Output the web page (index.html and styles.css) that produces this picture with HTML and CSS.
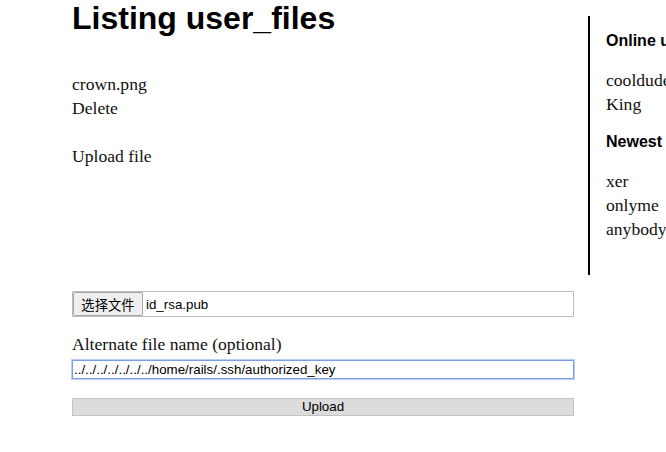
FILE: index.html
```html
<!DOCTYPE html>
<html>
<head>
<meta charset="utf-8">
<link rel="stylesheet" href="styles.css">
</head>
<body>
<div class="page">
  <main class="main">
    <h1 class="title">Listing user_files</h1>
    <div class="files">
      <div class="line">crown.png</div>
      <div class="line">Delete</div>
    </div>
    <div class="line upload-heading">Upload file</div>
    <form class="form">
      <div class="file-input">
        <span class="file-btn">选择文件</span>
        <span class="file-name">id_rsa.pub</span>
      </div>
      <label class="alt-label">Alternate file name (optional)</label>
      <input class="text-input" type="text" value="../../../../../../../home/rails/.ssh/authorized_key">
      <button class="upload-btn" type="button">Upload</button>
    </form>
  </main>
  <aside class="sidebar">
    <h3 class="side-title">Online users</h3>
    <div class="side-list">
      <div class="line">cooldude</div>
      <div class="line">King</div>
    </div>
    <h3 class="side-title side-title-2">Newest users</h3>
    <div class="side-list">
      <div class="line">xer</div>
      <div class="line">onlyme</div>
      <div class="line">anybody</div>
    </div>
  </aside>
</div>
</body>
</html>
```
FILE: styles.css
```css
html, body {
  margin: 0;
  padding: 0;
  background: #fff;
  overflow: hidden;
}
body {
  font-family: "Liberation Serif", serif;
  font-size: 17.6px;
  color: #111;
}
.page {
  display: flex;
  align-items: flex-start;
  padding-left: 72px;
  width: 760px;
}
.main {
  width: 502px;
  flex: none;
}
.title {
  font-family: "Liberation Sans", Arial, sans-serif;
  font-size: 32px;
  font-weight: bold;
  line-height: 36px;
  margin: 0;
  color: #000;
}
.files {
  margin-top: 36px;
}
.line {
  line-height: 24px;
}
.upload-heading {
  margin-top: 24px;
}
.form {
  display: flex;
  flex-direction: column;
  margin-top: 123px;
}
.file-input {
  display: flex;
  align-items: center;
  height: 26px;
  box-sizing: border-box;
  border: 1px solid #bdbdbd;
  padding: 0;
  font-family: "Liberation Sans", Arial, sans-serif;
  font-size: 13.33px;
}
.file-btn {
  box-sizing: border-box;
  height: 24px;
  width: 70px;
  display: flex;
  align-items: center;
  justify-content: center;
  background: #efefef;
  border: 1px solid #a5a5a5;
  border-radius: 2px;
  font-family: "Noto Sans CJK SC", sans-serif;
  font-size: 13.33px;
  color: #000;
}
.file-name {
  margin-left: 3px;
  color: #000;
}
.alt-label {
  margin-top: 15px;
  line-height: 24px;
}
.text-input {
  margin-top: 4px;
  height: 19px;
  box-sizing: border-box;
  border: 1px solid #7b9ee6;
  outline: 1px solid #bcd0f4;
  padding: 0 1px;
  font-family: "Liberation Sans", Arial, sans-serif;
  font-size: 13.33px;
  color: #000;
  width: 100%;
}
.upload-btn {
  margin-top: 19px;
  height: 18px;
  box-sizing: border-box;
  border: 1px solid #c3c3c3;
  background: #dcdcdc;
  font-family: "Liberation Sans", Arial, sans-serif;
  font-size: 13.33px;
  color: #000;
  padding: 0;
  line-height: 16px;
  width: 100%;
}
.sidebar {
  flex: none;
  margin-left: 14px;
  margin-top: 16px;
  border-left: 2px solid #000;
  padding-left: 16px;
  padding-bottom: 34px;
  width: 160px;
  white-space: nowrap;
}
.side-title {
  font-family: "Liberation Sans", Arial, sans-serif;
  font-size: 16px;
  font-weight: bold;
  margin: 15px 0 0;
  line-height: 20px;
  color: #000;
}
.side-title-2 {
  margin-top: 16px;
}
.side-list {
  margin-top: 17px;
}
```
